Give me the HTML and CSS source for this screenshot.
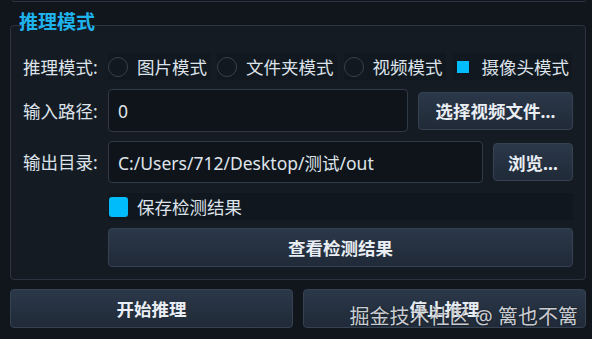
FILE: index.html
```html
<!DOCTYPE html>
<html>
<head>
	<title>推理模式</title>
	<link rel="stylesheet" href="styles.css">
</head>
<body>
	<div class="prevBox"></div>
	<div class="groupTitle">推理模式</div>
	<div class="group">
		<div class="row modeRow">
			<span class="label">推理模式:</span>
			<div class="radios">
				<div class="radio"><span class="dot"></span>图片模式</div>
				<div class="radio"><span class="dot"></span>文件夹模式</div>
				<div class="radio"><span class="dot"></span>视频模式</div>
				<div class="radio checked"><span class="dot"></span>摄像头模式</div>
			</div>
		</div>
		<div class="row inputRow">
			<span class="label">输入路径:</span>
			<div class="field">0</div>
			<div class="btn wideBtn">选择视频文件...</div>
		</div>
		<div class="row outputRow">
			<span class="label">输出目录:</span>
			<div class="field">C:/Users/712/Desktop/测试/out</div>
			<div class="btn smallBtn">浏览...</div>
		</div>
		<div class="row checkRow">
			<span class="label"></span>
			<div class="check"><span class="box"></span>保存检测结果</div>
		</div>
		<div class="row">
			<span class="label"></span>
			<div class="btn fullBtn">查看检测结果</div>
		</div>
	</div>
	<div class="actions">
		<div class="btn actBtn">开始推理</div>
		<div class="btn actBtn">停止推理</div>
	</div>
	<div class="watermark">掘金技术社区 @ 篱也不篱</div>
</body>
</html>
```

FILE: styles.css
```css
*{
	padding:0;
	margin:0;
	box-sizing: border-box;
}
body{
	width:592px;
	height:339px;
	overflow: hidden;
	position: relative;
	background-color: #11161d;
	font-family: "Noto Sans", "Noto Sans CJK SC", sans-serif;
	font-size: 17.5px;
	color: #dde3ea;
}

.prevBox{
	height:2px;
	margin:0 6px 0 12px;
	border:1px solid #2a333f;
	border-top: none;
	border-radius: 0 0 4px 4px;
}

.groupTitle{
	position: relative;
	z-index: 1;
	margin:9px 0 -8px 19px;
	font-size: 19px;
	font-weight: bold;
	line-height: 22px;
	color: #1fb3ee;
}

.group{
	margin:0 6px 0 10px;
	height:255px;
	border:1px solid #2b3440;
	border-radius: 4px;
	background-color: #151b23;
	padding:27px 12px 0 12px;
	display: flex;
	flex-direction: column;
}

.row{
	display: flex;
	align-items: center;
}
.label{
	width:85px;
	flex-shrink: 0;
	line-height: 20px;
}

.modeRow{
	height:27px;
}
.radios{
	display: flex;
	gap:7px;
}
.radio{
	display: flex;
	align-items: center;
	gap:9px;
	height:27px;
	padding:0 3px 0 0;
	background-color: #121820;
	white-space: nowrap;
}
.radio .dot{
	width:20px;
	height:20px;
	border:1px solid #38414d;
	border-radius: 50%;
}
.radio.checked .dot{
	border: none;
	border-radius: 0;
	background: linear-gradient(#00bcfa,#00bcfa) center / 12px 12px no-repeat;
}

.inputRow{
	margin-top:9px;
	height:43px;
	gap:10px;
}
.outputRow{
	margin-top:9px;
	height:42px;
	gap:10px;
}
.inputRow .label, .outputRow .label{
	margin-right:-10px;
}
.field{
	flex:1;
	height:100%;
	display: flex;
	align-items: center;
	padding-left:9px;
	background-color: #0f141b;
	border:1px solid #303a47;
	border-radius: 4px;
	color: #dfe4ea;
	white-space: nowrap;
}

.btn{
	display: flex;
	align-items: center;
	justify-content: center;
	background: linear-gradient(#2b3849, #202a38);
	border:1px solid #364252;
	border-radius: 4px;
	font-weight: bold;
	color: #e9eef4;
	white-space: nowrap;
}
.wideBtn{
	width:155px;
	height:38px;
}
.smallBtn{
	width:80px;
	height:38px;
}

.checkRow{
	margin-top:10px;
	height:27px;
}
.check{
	flex:1;
	height:100%;
	display: flex;
	align-items: center;
	gap:9px;
	background-color: #11171e;
}
.check .box{
	width:19px;
	height:20px;
	margin-left:1px;
	border-radius: 3px;
	background-color: #00bcfa;
}

.fullBtn{
	flex:1;
	height:39px;
	margin-top:8px;
}

.actions{
	display: flex;
	gap:10px;
	margin:9px 6px 0 10px;
}
.actBtn{
	flex:1;
	height:39px;
}

.watermark{
	position: absolute;
	right:14px;
	bottom:9px;
	font-size: 20px;
	line-height: 26px;
	color: rgba(235,238,242,0.85);
	text-shadow: 0 0 2px rgba(0,0,0,0.6);
}
```
